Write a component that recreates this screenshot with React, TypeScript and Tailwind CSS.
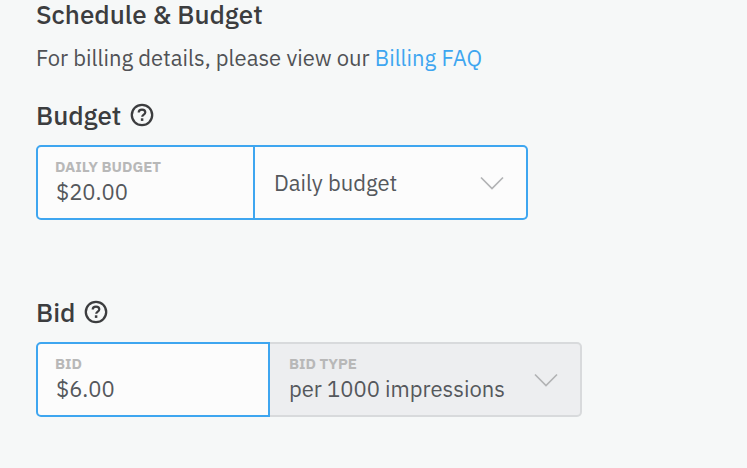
import React from "react";
import clsx from "clsx";

interface HeadingProps {
  title: string;
}

interface AmountFieldProps {
  id: string;
  label: string;
  value: string;
  className?: string;
}

interface SelectFieldProps {
  id: string;
  name: string;
  label?: string;
  options: string[];
  disabled?: boolean;
}

const HelpIcon = () => (
  <svg viewBox="0 0 24 24" className="size-6" fill="none" stroke="currentColor" aria-hidden="true">
    <circle cx="12" cy="12" r="10.2" strokeWidth="2.3" />
    <path d="M8.7 9.6c0-1.9 1.4-3 3.3-3s3.3 1.1 3.3 2.7c0 2.3-3.1 2.2-3.1 4.5" strokeWidth="2.2" />
    <path d="M12.1 15.3v2.6" strokeWidth="2.5" />
  </svg>
);

const ChevronIcon = ({ className }: { className?: string }) => (
  <svg viewBox="0 0 24 14" className={clsx("h-[14px] w-6", className)} fill="none" stroke="#b2b3b5" strokeWidth="1.7" aria-hidden="true">
    <path d="M1 1.5 12 12.5 23 1.5" />
  </svg>
);

const HelpHeading = ({ title }: HeadingProps) => (
  <div className="flex items-center gap-[9px]">
    <h3 className="text-[26px] leading-8 font-medium">{title}</h3>
    <button type="button" aria-label={`About ${title}`}>
      <HelpIcon />
    </button>
  </div>
);

const AmountField = ({ id, label, value, className }: AmountFieldProps) => (
  <div className={clsx("flex flex-col rounded-l-[5px] border-2 border-[#3ea6f0] bg-[#fcfcfc] px-[17px] pt-2.5 pb-[13px]", className)}>
    <label htmlFor={id} className="text-[15px] leading-5 font-bold text-[#b8b8b8] uppercase">
      {label}
    </label>
    <input id={id} type="text" defaultValue={value} className="h-7 w-full bg-transparent pl-px text-[22px] text-[#55585c] outline-none" />
  </div>
);

const SelectField = ({ id, name, label, options, disabled = false }: SelectFieldProps) => (
  <div
    className={clsx(
      "relative flex min-w-0 flex-1 flex-col rounded-r-[5px] border-2 border-l-0",
      disabled ? "border-[#d8dadc] bg-[#edeef0]" : "border-[#3ea6f0] bg-[#fcfcfc]"
    )}
  >
    {label && (
      <label htmlFor={id} className="px-[19px] pt-2.5 text-[15px] leading-5 font-bold text-[#b8b8b8] uppercase">
        {label}
      </label>
    )}
    <select
      id={id}
      aria-label={name}
      disabled={disabled}
      className={clsx(
        "w-full appearance-none bg-transparent px-[19px] text-[22px] leading-7 text-[#55585c] outline-none disabled:opacity-100",
        label ? "h-[30px]" : "h-full"
      )}
    >
      {options.map((option) => (
        <option key={option}>{option}</option>
      ))}
    </select>
    <ChevronIcon className="pointer-events-none absolute inset-y-0 right-[22px] my-auto" />
  </div>
);

const App: React.FC = () => {
  return (
    <main className="min-h-screen bg-[#f6f8f8] px-9 font-['IBM_Plex_Sans',Roboto,sans-serif] text-[#3c3d3f]">
      <h2 className="text-[26px] leading-7 font-medium">Schedule &amp; Budget</h2>
      <p className="mt-4 text-[22px] leading-7 text-[#505255]">
        For billing details, please view our{" "}
        <a href="#billing-faq" className="text-[#3ea6f0]">
          Billing FAQ
        </a>
      </p>

      <section className="mt-[27px]">
        <HelpHeading title="Budget" />
        <div className="mt-3.5 flex w-full max-w-[492px]">
          <AmountField id="daily-budget" label="Daily budget" value="$20.00" className="w-[219px]" />
          <SelectField id="budget-type" name="Budget type" options={["Daily budget", "Total budget"]} />
        </div>
      </section>

      <section className="mt-19">
        <HelpHeading title="Bid" />
        <div className="mt-3.5 flex w-full max-w-[546px]">
          <AmountField id="bid" label="Bid" value="$6.00" className="w-[234px]" />
          <SelectField id="bid-type" name="Bid type" label="Bid type" options={["per 1000 impressions"]} disabled />
        </div>
      </section>
    </main>
  );
};

export default App;
